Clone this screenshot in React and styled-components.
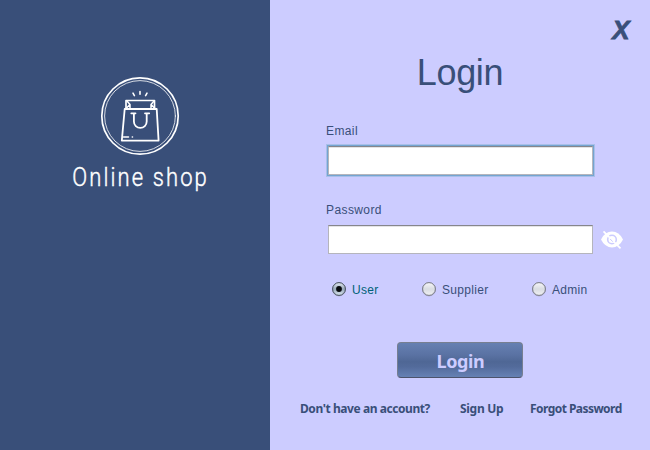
import React from "react";
import styled, { createGlobalStyle } from "styled-components";

const Global = createGlobalStyle`
  body { margin: 0; }
  * { box-sizing: border-box; }
`;

const navy = "#394f79";
const sans = '"Liberation Sans", Arial, sans-serif';
const humanist = '"Noto Sans", "Open Sans", sans-serif';

const Page = styled.div`
  display: flex;
  width: 650px;
  height: 450px;
  overflow: hidden;
  font-family: ${sans};
  color: ${navy};
`;

const Brand = styled.aside`
  display: flex;
  flex-direction: column;
  align-items: center;
  width: 270px;
  padding: 76px 0 0 10px;
  background: ${navy};
`;

const BrandName = styled.div`
  margin-top: 7px;
  font: 300 25px/30px Roboto, sans-serif;
  letter-spacing: 2.4px;
  text-indent: 2px;
  transform: scaleX(0.88);
  -webkit-text-stroke: 0.4px #fff;
  color: #fff;
  white-space: nowrap;
`;

const Panel = styled.main`
  display: flex;
  flex-direction: column;
  width: 380px;
  background: #ccccff;
`;

const Close = styled.button`
  align-self: flex-end;
  width: 24px;
  height: 30px;
  margin: 15px 17px 0 0;
  padding: 0;
  border: 0;
  background: none;
  color: ${navy};
  font: italic 700 26px/30px ${sans};
  -webkit-text-stroke: 0.8px ${navy};
  text-align: center;
`;

const Title = styled.h1`
  margin: 7px 0 0;
  text-align: center;
  font: 400 36px/42px ${sans};
  letter-spacing: -0.3px;
`;

const Form = styled.form`
  display: flex;
  flex-direction: column;
`;

const Label = styled.label`
  height: 16px;
  margin: ${(p) => p.$gap}px 0 0 56px;
  font-size: 12px;
  line-height: 16px;
  letter-spacing: 0.4px;
`;

const FieldRow = styled.div`
  display: flex;
  align-items: center;
  gap: 7px;
  height: 29px;
  margin: 7px 0 0 58px;
`;

const Field = styled.input`
  width: 265px;
  height: 29px;
  padding: 0 6px;
  border: 1px solid #b5b5bc;
  border-top-color: #86868b;
  border-radius: 0;
  outline: none;
  background: #fff;
  box-shadow: inset 0 1px #e4e4e6${(p) => (p.$active ? ", 0 0 0 1px #73a4d1, 0 0 0 2px #a9bfe8" : "")};
`;

const Options = styled.div`
  display: grid;
  grid-template-columns: 90px 110px 80px;
  height: 16px;
  margin: 28px 0 0 62px;
`;

const Option = styled.label`
  display: flex;
  align-items: center;
  gap: 6px;
  font-size: 12px;
  line-height: 16px;
  letter-spacing: 0.3px;
  color: ${(p) => (p.$checked ? "#006276" : navy)};
`;

const Submit = styled.button`
  align-self: flex-start;
  width: 126px;
  height: 36px;
  margin: 44px 0 0 127px;
  padding: 0 0 0 1px;
  border: 1px solid #777f91;
  border-bottom-color: #4d536b;
  border-radius: 4px;
  background: linear-gradient(#6680b2, #5a72a3 35%, #4f6795 55%, #536b9b 70%, #6681b4);
  color: #ccccff;
  font: 700 18px/36px ${humanist};
  letter-spacing: -0.4px;
`;

const Links = styled.nav`
  display: flex;
  margin: 23px 0 0 30px;
  font: 700 12px/16px ${humanist};
  white-space: nowrap;
`;

const LinkItem = styled.span`
  width: ${(p) => p.$width}px;
  letter-spacing: ${(p) => p.$track}px;
`;

function Logo() {
  return (
    <svg width="80" height="80" viewBox="100 76 80 80" fill="none" stroke="#fff" strokeLinecap="round" strokeLinejoin="round">
      <circle cx="140" cy="116" r="38.2" strokeWidth="1.7" />
      <circle cx="140" cy="116" r="35.4" strokeWidth="0.8" />
      <path d="M124.7 109h32l1.9 31.6h-36.8z" strokeWidth="1.8" />
      <path d="M126 108.5v-8h28.5v8" strokeWidth="1.7" />
      <path d="M127 101l3 3.5-4 4M154 101l-3 3.5 4 4M130 104.5v4M151 104.5v4" strokeWidth="1.5" />
      <path d="M131.3 113.3h4.2M145 113.3h4.2M133.9 113.5v8a6.4 6.4 0 0 0 12.8 0v-8" strokeWidth="1.8" />
      <path d="M123.5 137h5M132.3 137h.2M140 91.5v2.7M133 93.2l1.4 2.4M147 93.2l-1.4 2.4" strokeWidth="1.6" />
    </svg>
  );
}

function HiddenEye() {
  return (
    <svg width="24" height="24" viewBox="0 0 24 24">
      <path d="M1 11.5Q5 3.6 12 3.6t11 7.9q-4 7.9-11 7.9T1 11.5z" fill="#fff" />
      <circle cx="12" cy="11.5" r="4.3" fill="none" stroke="#ccccff" strokeWidth="1.6" />
      <path d="M3.5 3.3L20.5 20.3" stroke="#fff" strokeWidth="1.7" />
      <path d="M10.2 11l2.5 2.7" stroke="#ccccff" strokeWidth="1" />
    </svg>
  );
}

function RadioMark({ checked }) {
  return (
    <svg width="14" height="16" viewBox="0 0 14 16">
      <defs>
        <linearGradient id="radioOff" x2="0" y2="1">
          <stop stopColor="#f8f8fa" />
          <stop offset=".5" stopColor="#d9dce2" />
          <stop offset="1" stopColor="#f0f1f3" />
        </linearGradient>
        <linearGradient id="radioOn" x2="0" y2="1">
          <stop stopColor="#e5ecf3" />
          <stop offset=".5" stopColor="#98a8b9" />
          <stop offset="1" stopColor="#dce9f2" />
        </linearGradient>
      </defs>
      <circle cx="7" cy="7.3" r="6.6" fill="none" stroke="#9898b0" strokeWidth=".7" />
      <circle cx="7" cy="7" r="6.4" fill={checked ? "url(#radioOn)" : "url(#radioOff)"} stroke={checked ? "#424c5b" : "#777984"} />
      {checked && <circle cx="7" cy="7" r="2.9" fill="#06080c" />}
    </svg>
  );
}

export default function App() {
  return (
    <>
      <Global />
      <Page>
        <Brand>
          <Logo />
          <BrandName>Online shop</BrandName>
        </Brand>
        <Panel>
          <Close type="button">X</Close>
          <Title>Login</Title>
          <Form>
            <Label htmlFor="email" $gap={29}>Email</Label>
            <FieldRow><Field id="email" $active /></FieldRow>
            <Label htmlFor="password" $gap={27}>Password</Label>
            <FieldRow><Field id="password" type="password" /><HiddenEye /></FieldRow>
            <Options>
              <Option $checked><RadioMark checked />User</Option>
              <Option><RadioMark />Supplier</Option>
              <Option><RadioMark />Admin</Option>
            </Options>
            <Submit type="button">Login</Submit>
          </Form>
          <Links>
            <LinkItem $width={160} $track={-0.43}>Don't have an account?</LinkItem>
            <LinkItem $width={70} $track={-0.3}>Sign Up</LinkItem>
            <LinkItem $width={100} $track={-0.55}>Forgot Password</LinkItem>
          </Links>
        </Panel>
      </Page>
    </>
  );
}
